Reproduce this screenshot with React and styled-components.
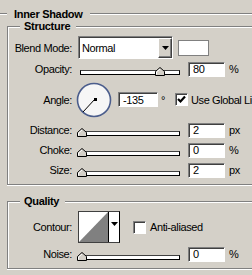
import React from 'react';
import styled, { createGlobalStyle } from 'styled-components';

const GlobalStyle = createGlobalStyle`
  body {
    margin: 0;
    background: #d4d0c8;
  }
`;

const Panel = styled.div`
  width: 252px;
  height: 275px;
  overflow: hidden;
  box-sizing: border-box;
  padding-top: 7px;
  background: #d4d0c8;
  color: #000;
  font: 11px "Liberation Sans", Arial, sans-serif;
  letter-spacing: -0.4px;
`;

const Heading = styled.div`
  display: flex;
  align-items: center;
  height: 14px;
  margin-right: -20px;
`;

const Rule = styled.div`
  height: 0;
  border-top: 1px solid #808080;
  border-bottom: 1px solid #fff;
  width: ${p => (p.$w ? `${p.$w}px` : 'auto')};
  flex: ${p => (p.$w ? 'none' : 1)};
`;

const HeadingTitle = styled.span`
  padding: 0 7px;
  font-weight: bold;
  letter-spacing: -0.3px;
  line-height: 14px;
`;

const Group = styled.div`
  margin: ${p => p.$top}px -20px 0 7px;
  padding: 0 0 4px;
  border: 1px solid #808080;
  box-shadow: inset 1px 1px 0 #fff, 0 1px 0 #fff;
`;

const GroupTitle = styled.div`
  width: fit-content;
  height: 13px;
  margin: -7px 0 0 12px;
  padding: 0 6px 0 4px;
  background: #d4d0c8;
  font-weight: bold;
  letter-spacing: -0.3px;
  line-height: 13px;
`;

const Rows = styled.div`
  padding-top: ${p => p.$top}px;
`;

const Row = styled.div`
  display: flex;
  align-items: center;
  height: ${p => p.$h}px;
  white-space: nowrap;
`;

const Label = styled.div`
  flex: none;
  width: 64px;
  margin-right: 6px;
  text-align: right;
`;

const sunken = `
  box-sizing: border-box;
  border: 1px solid;
  border-color: #808080 #fff #fff #808080;
  box-shadow: inset 1px 1px 0 #404040;
  background: #fff;
`;

const Select = styled.div`
  ${sunken}
  flex: none;
  display: flex;
  width: 95px;
  height: 23px;
  padding: 1px 0 0 1px;
`;

const SelectText = styled.span`
  flex: 1;
  align-self: center;
  padding-left: 2px;
`;

const DropButton = styled.div`
  flex: none;
  display: flex;
  align-items: center;
  justify-content: center;
  width: 14px;
  box-sizing: border-box;
  border: 1px solid;
  border-color: #fff #404040 #404040 #fff;
  box-shadow: inset -1px -1px 0 #808080;
  background: #d4d0c8;
`;

const Swatch = styled.div`
  flex: none;
  width: 31px;
  height: 16px;
  margin-left: 5px;
  box-sizing: border-box;
  border: 1px solid #808080;
  background: #fff;
`;

const Field = styled.input`
  ${sunken}
  flex: none;
  width: ${p => p.$w || 37}px;
  height: 15px;
  margin: 0 0 0 ${p => p.$ml || 0}px;
  padding: 0 0 0 4px;
  font: inherit;
  letter-spacing: inherit;
  color: #000;
  outline: none;
`;

const Unit = styled.span`
  margin-left: ${p => p.$ml || 4}px;
`;

const Slider = styled.div`
  position: relative;
  flex: none;
  width: 100px;
  height: 14px;
  margin: 0 8px 0 2px;
`;

const Track = styled.div`
  box-sizing: border-box;
  height: 5px;
  margin-top: 8px;
  border: 1px solid #000;
  border-top-color: #404040;
  background: #fff;
`;

const Thumb = styled.svg`
  position: absolute;
  top: 5px;
`;

const Dial = styled.svg`
  flex: none;
  margin-left: -2px;
`;

const Box = styled.div`
  ${sunken}
  flex: none;
  display: flex;
  align-items: center;
  justify-content: center;
  width: 13px;
  height: 13px;
  margin-left: ${p => p.$ml}px;
`;

const BoxLabel = styled.span`
  margin-left: ${p => p.$ml || 3}px;
`;

const Contour = styled.div`
  flex: none;
  display: flex;
  width: 42px;
  height: 32px;
  box-sizing: border-box;
  border: 1px solid #404040;
  border-right-color: #000;
  background: #fff;
`;

const ContourArrow = styled.div`
  flex: 1;
  display: flex;
  justify-content: center;
  padding-top: 10px;
  border-left: 1px solid #000;
`;

const Caret = () => (
  <svg width="7" height="4" viewBox="0 0 7 4">
    <polygon points="0,0 7,0 3.5,4" fill="#000" />
  </svg>
);

const SliderField = ({ value }) => (
  <Slider>
    <Track />
    <Thumb width="10" height="9" viewBox="0 0 10 9" style={{ left: `${-3 + value * 0.975}px` }}>
      <polygon points="0.5,8.5 0.5,4.5 5,0.5 9.5,4.5 9.5,8.5" fill="#d4d0c8" stroke="#000" />
      <polyline points="1.5,7.5 1.5,5 5,2" fill="none" stroke="#fff" />
    </Thumb>
  </Slider>
);

const Check = ({ checked, ml }) => (
  <Box $ml={ml}>
    {checked && (
      <svg width="9" height="9" viewBox="0 0 9 9">
        <polyline points="1,4 3.5,6.5 8,1.5" fill="none" stroke="#000" strokeWidth="2.2" />
      </svg>
    )}
  </Box>
);

const App = () => (
  <Panel>
    <GlobalStyle />
    <Heading>
      <Rule $w={7} />
      <HeadingTitle>Inner Shadow</HeadingTitle>
      <Rule />
    </Heading>

    <Group $top={5}>
      <GroupTitle>Structure</GroupTitle>
      <Rows $top={3}>
        <Row $h={23}>
          <Label>Blend Mode:</Label>
          <Select>
            <SelectText>Normal</SelectText>
            <DropButton><Caret /></DropButton>
          </Select>
          <Swatch />
        </Row>
        <Row $h={20}>
          <Label>Opacity:</Label>
          <SliderField value={80} />
          <Field readOnly value="80" />
          <Unit>%</Unit>
        </Row>
        <Row $h={41}>
          <Label>Angle:</Label>
          <Dial width="36" height="36" viewBox="0 0 36 36">
            <circle cx="18" cy="18" r="16.5" fill="#f6f6f6" stroke="#4b5d8c" strokeWidth="1.6" />
            <line x1="19" y1="17" x2="7" y2="30" stroke="#000" strokeWidth="1" />
            <rect x="18" y="16" width="3" height="3" fill="#000" />
          </Dial>
          <Field readOnly value="-135" $w={40} $ml={6} />
          <Unit $ml={3}>°</Unit>
          <Check checked ml={10} />
          <BoxLabel>Use Global Light</BoxLabel>
        </Row>
        <Row $h={20}>
          <Label>Distance:</Label>
          <SliderField value={0} />
          <Field readOnly value="2" />
          <Unit>px</Unit>
        </Row>
        <Row $h={20}>
          <Label>Choke:</Label>
          <SliderField value={0} />
          <Field readOnly value="0" />
          <Unit>%</Unit>
        </Row>
        <Row $h={20}>
          <Label>Size:</Label>
          <SliderField value={0} />
          <Field readOnly value="2" />
          <Unit>px</Unit>
        </Row>
      </Rows>
    </Group>

    <Group $top={16}>
      <GroupTitle>Quality</GroupTitle>
      <Rows $top={2}>
        <Row $h={34}>
          <Label>Contour:</Label>
          <Contour>
            <svg width="29" height="30" viewBox="0 0 29 30">
              <rect width="29" height="30" fill="#fff" />
              <polygon points="0,30 29,0 29,30" fill="#808080" />
            </svg>
            <ContourArrow><Caret /></ContourArrow>
          </Contour>
          <Check ml={13} />
          <BoxLabel $ml={4}>Anti-aliased</BoxLabel>
        </Row>
        <Row $h={20}>
          <Label>Noise:</Label>
          <SliderField value={0} />
          <Field readOnly value="0" />
          <Unit>%</Unit>
        </Row>
      </Rows>
    </Group>
  </Panel>
);

export default App;
